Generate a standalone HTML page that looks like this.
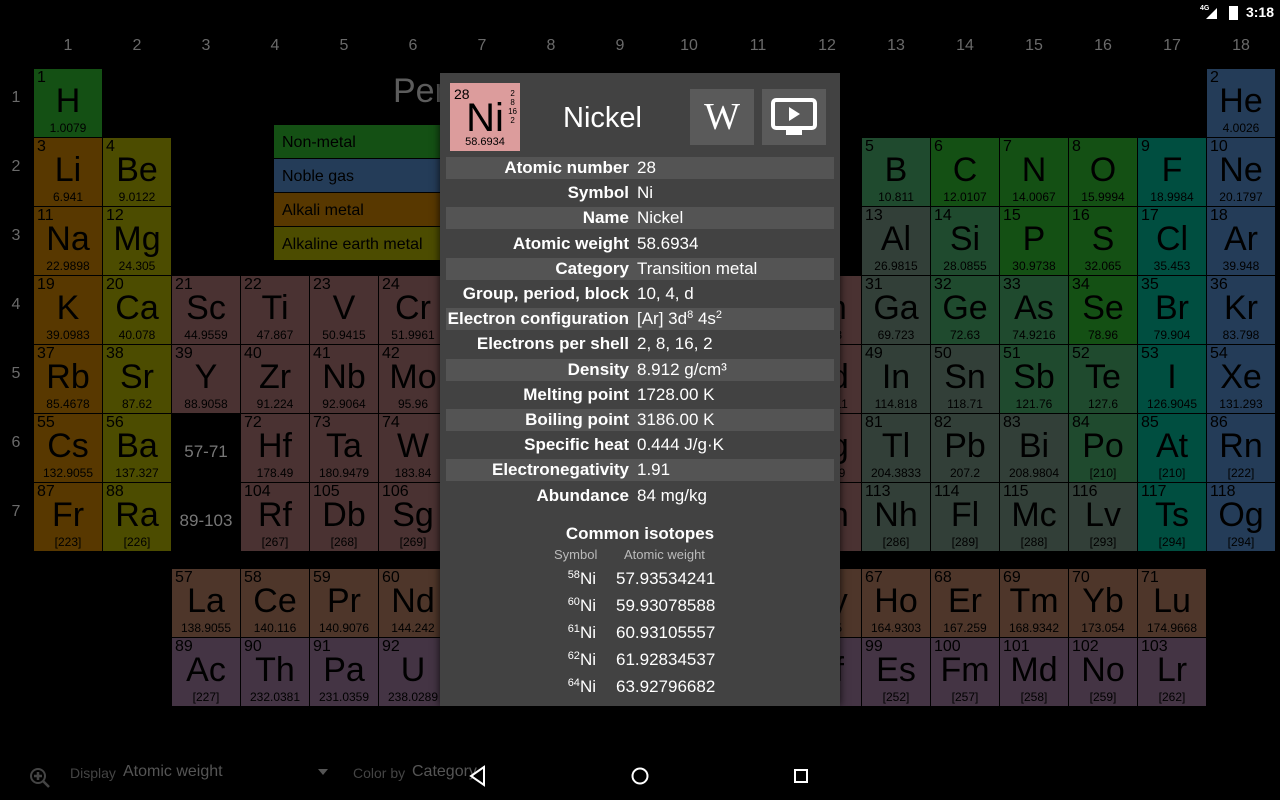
<!DOCTYPE html>
<html><head><meta charset="utf-8">
<style>
*{margin:0;padding:0;box-sizing:border-box}
body{width:1280px;height:800px;background:#000;overflow:hidden;position:relative;font-family:"Liberation Sans",sans-serif}
.c{position:absolute;width:68px;height:68px;color:#000;overflow:hidden}
.c .n{position:absolute;left:3px;top:1px;font-size:16px;line-height:16px}
.c .s{position:absolute;left:0;right:0;top:13px;text-align:center;font-size:34px;line-height:38px}
.c .w{position:absolute;left:0;right:0;top:52px;text-align:center;font-size:12px;line-height:14px}
.hd{position:absolute;color:#6a6a6a;font-size:16px;width:40px;text-align:center}
.lg{position:absolute;left:274px;width:200px;height:33px;font-size:16px;line-height:36px;padding-left:8px;color:#000}
#dlg{position:absolute;left:440px;top:73px;width:400px;height:633px;background:#424242;box-shadow:0 0 8px rgba(0,0,0,.8);color:#fff}
.row{position:absolute;left:6px;width:388px;height:22px;font-size:17px;line-height:22px}
.row.a{background:#545454}
.row .l{position:absolute;right:205px;font-weight:bold;white-space:nowrap}
.row .v{position:absolute;left:191px;white-space:nowrap}
sup{font-size:11px;vertical-align:6px;line-height:0}
.iso{position:absolute;font-size:17px;line-height:20px}
</style></head><body>
<div style="position:absolute;right:6px;top:4px;color:#fff;font-size:14px;font-weight:bold">3:18</div>
<div style="position:absolute;left:1200px;top:5px;color:#fff;font-size:7px;font-weight:bold">4G</div>
<div style="position:absolute;left:1206px;top:8px;width:0;height:0;border-left:11px solid transparent;border-bottom:11px solid #fff"></div>
<div style="position:absolute;left:1229px;top:6px;width:9px;height:14px;background:#fff"></div>
<div style="position:absolute;left:393px;top:72px;font-size:34px;color:#5c5c5c;white-space:nowrap">Periodic Table of Elements</div>
<div id="tbl"></div>
<div class="lg" style="top:125px;background:#145014">Non-metal</div>
<div class="lg" style="top:159px;background:#243c58">Noble gas</div>
<div class="lg" style="top:193px;background:#583800">Alkali metal</div>
<div class="lg" style="top:227px;background:#4c4c00">Alkaline earth metal</div>
<div style="position:absolute;left:172px;top:414px;width:68px;height:68px;color:#777;font-size:17px;text-align:center;line-height:76px">57-71</div>
<div style="position:absolute;left:172px;top:483px;width:68px;height:68px;color:#777;font-size:17px;text-align:center;line-height:76px">89-103</div>

<svg style="position:absolute;left:28px;top:766px" width="26" height="26"><circle cx="10" cy="10" r="7" fill="none" stroke="#444" stroke-width="2"/><path d="M10 6v8M6 10h8M15 15l6 6" stroke="#444" stroke-width="2.5"/></svg>
<div style="position:absolute;left:70px;top:765px;color:#444;font-size:14px">Display</div>
<div style="position:absolute;left:123px;top:763px;color:#555;font-size:16px">Atomic weight</div>
<div style="position:absolute;left:318px;top:769px;border-left:5px solid transparent;border-right:5px solid transparent;border-top:6px solid #555"></div>
<div style="position:absolute;left:353px;top:765px;color:#444;font-size:14px">Color by</div>
<div style="position:absolute;left:412px;top:763px;color:#555;font-size:16px">Category</div>
<svg style="position:absolute;left:466px;top:764px" width="24" height="24"><path d="M18 3L5 12l13 9z" fill="none" stroke="#fff" stroke-width="2"/></svg>
<svg style="position:absolute;left:628px;top:764px" width="24" height="24"><circle cx="12" cy="12" r="7.5" fill="none" stroke="#fff" stroke-width="2"/></svg>
<svg style="position:absolute;left:789px;top:764px" width="24" height="24"><rect x="6" y="6" width="12" height="12" fill="none" stroke="#fff" stroke-width="2"/></svg>

<div id="dlg">
 <div style="position:absolute;left:10px;top:10px;width:70px;height:68px;background:#dc9c9c;color:#000">
  <div style="position:absolute;left:4px;top:3px;font-size:14px">28</div>
  <div style="position:absolute;right:3px;top:6px;font-size:8px;line-height:9px;text-align:center">2<br>8<br>16<br>2</div>
  <div style="position:absolute;left:0;width:70px;top:14px;text-align:center;font-size:40px;line-height:42px">Ni</div>
  <div style="position:absolute;left:0;width:70px;top:53px;text-align:center;font-size:11px">58.6934</div>
 </div>
 <div style="position:absolute;left:80px;width:165px;top:29px;text-align:center;font-size:29px">Nickel</div>
 <div style="position:absolute;left:250px;top:16px;width:64px;height:56px;background:#5a5a5a;font-family:'Liberation Serif',serif;font-size:38px;text-align:center;line-height:56px">W</div>
 <div style="position:absolute;left:322px;top:16px;width:64px;height:56px;background:#5a5a5a">
  <svg width="64" height="56"><rect x="11" y="11" width="42" height="28" rx="3" fill="none" stroke="#fff" stroke-width="4"/><path d="M27 18v14l11-7z" fill="#fff"/><rect x="24" y="41" width="16" height="5" fill="#fff"/></svg>
 </div>
 <div id="rows"></div>
 <div style="position:absolute;left:0;width:400px;top:451px;text-align:center;font-weight:bold;font-size:17px">Common isotopes</div>
 <div style="position:absolute;left:114px;top:474px;font-size:13px;color:#bbb">Symbol</div>
 <div style="position:absolute;left:184px;top:474px;font-size:13px;color:#bbb">Atomic weight</div>
 <div id="isos"></div>
</div>
<script>
var T={nm:'#145014',ng:'#243c58',al:'#583800',ae:'#4c4c00',md:'#1f4a2e',pt:'#323f38',ha:'#004e40',tm:'#4a3232',la:'#4e362a',ac:'#443444'};
var E=[
[1,1,1,'H','1.0079','nm'],[2,1,18,'He','4.0026','ng'],
[3,2,1,'Li','6.941','al'],[4,2,2,'Be','9.0122','ae'],[5,2,13,'B','10.811','md'],[6,2,14,'C','12.0107','nm'],[7,2,15,'N','14.0067','nm'],[8,2,16,'O','15.9994','nm'],[9,2,17,'F','18.9984','ha'],[10,2,18,'Ne','20.1797','ng'],
[11,3,1,'Na','22.9898','al'],[12,3,2,'Mg','24.305','ae'],[13,3,13,'Al','26.9815','pt'],[14,3,14,'Si','28.0855','md'],[15,3,15,'P','30.9738','nm'],[16,3,16,'S','32.065','nm'],[17,3,17,'Cl','35.453','ha'],[18,3,18,'Ar','39.948','ng']];
function rowp(r,start,syms,ws,cats){for(var i=0;i<syms.length;i++)E.push([start+i,r,i+1,syms[i],ws[i],cats[i]]);}
var tmc=['al','ae'].concat(Array(10).fill('tm'));
rowp(4,19,['K','Ca','Sc','Ti','V','Cr','Mn','Fe','Co','Ni','Cu','Zn','Ga','Ge','As','Se','Br','Kr'],['39.0983','40.078','44.9559','47.867','50.9415','51.9961','54.938','55.845','58.9332','58.6934','63.546','65.38','69.723','72.63','74.9216','78.96','79.904','83.798'],tmc.concat(['pt','md','md','nm','ha','ng']));
rowp(5,37,['Rb','Sr','Y','Zr','Nb','Mo','Tc','Ru','Rh','Pd','Ag','Cd','In','Sn','Sb','Te','I','Xe'],['85.4678','87.62','88.9058','91.224','92.9064','95.96','[98]','101.07','102.9055','106.42','107.8682','112.411','114.818','118.71','121.76','127.6','126.9045','131.293'],tmc.concat(['pt','pt','md','md','ha','ng']));
var s6=['Cs','Ba',null,'Hf','Ta','W','Re','Os','Ir','Pt','Au','Hg','Tl','Pb','Bi','Po','At','Rn'],w6=['132.9055','137.327',null,'178.49','180.9479','183.84','186.207','190.23','192.217','195.084','196.9666','200.59','204.3833','207.2','208.9804','[210]','[210]','[222]'],c6=tmc.concat(['pt','pt','pt','md','ha','ng']);
var n6=[55,56,0,72,73,74,75,76,77,78,79,80,81,82,83,84,85,86];
var s7=['Fr','Ra',null,'Rf','Db','Sg','Bh','Hs','Mt','Ds','Rg','Cn','Nh','Fl','Mc','Lv','Ts','Og'],w7=['[223]','[226]',null,'[267]','[268]','[269]','[270]','[269]','[278]','[281]','[281]','[285]','[286]','[289]','[288]','[293]','[294]','[294]'],c7=tmc.concat(['pt','pt','pt','pt','ha','ng']);
var n7=[87,88,0,104,105,106,107,108,109,110,111,112,113,114,115,116,117,118];
for(var i=0;i<18;i++){if(s6[i])E.push([n6[i],6,i+1,s6[i],w6[i],c6[i]]);if(s7[i])E.push([n7[i],7,i+1,s7[i],w7[i],c7[i]]);}
var la=['La','Ce','Pr','Nd','Pm','Sm','Eu','Gd','Tb','Dy','Ho','Er','Tm','Yb','Lu'],law=['138.9055','140.116','140.9076','144.242','[145]','150.36','151.964','157.25','158.9254','162.5','164.9303','167.259','168.9342','173.054','174.9668'];
var ac=['Ac','Th','Pa','U','Np','Pu','Am','Cm','Bk','Cf','Es','Fm','Md','No','Lr'],acw=['[227]','232.0381','231.0359','238.0289','[237]','[244]','[243]','[247]','[247]','[251]','[252]','[257]','[258]','[259]','[262]'];
var h='';
function cell(n,x,y,s,w,c){h+='<div class="c" style="left:'+x+'px;top:'+y+'px;background:'+T[c]+'"><div class="n">'+n+'</div><div class="s">'+s+'</div><div class="w">'+w+'</div></div>';}
E.forEach(function(e){cell(e[0],34+(e[2]-1)*69,69+(e[1]-1)*69,e[3],e[4],e[5]);});
for(var i=0;i<15;i++){cell(57+i,172+i*69,569,la[i],law[i],'la');cell(89+i,172+i*69,638,ac[i],acw[i],'ac');}
for(var i=1;i<=18;i++)h+='<div class="hd" style="left:'+(48+(i-1)*69)+'px;top:37px">'+i+'</div>';
for(var i=1;i<=7;i++)h+='<div class="hd" style="left:-4px;top:'+(89+(i-1)*69)+'px">'+i+'</div>';
document.getElementById('tbl').innerHTML=h;
var R=[['Atomic number','28'],['Symbol','Ni'],['Name','Nickel'],['Atomic weight','58.6934'],['Category','Transition metal'],['Group, period, block','10, 4, d'],['Electron configuration','[Ar] 3d<sup>8</sup> 4s<sup>2</sup>'],['Electrons per shell','2, 8, 16, 2'],['Density','8.912 g/cm³'],['Melting point','1728.00 K'],['Boiling point','3186.00 K'],['Specific heat','0.444 J/g·K'],['Electronegativity','1.91'],['Abundance','84 mg/kg']];
var r='';R.forEach(function(x,i){r+='<div class="row'+(i%2==0?' a':'')+'" style="top:'+(84+i*25.2)+'px"><span class="l">'+x[0]+'</span><span class="v">'+x[1]+'</span></div>';});
document.getElementById('rows').innerHTML=r;
var I=[['58','57.93534241'],['60','59.93078588'],['61','60.93105557'],['62','61.92834537'],['64','63.92796682']];
var q='';I.forEach(function(x,i){var y=496+i*27;q+='<div class="iso" style="right:244px;top:'+y+'px"><sup>'+x[0]+'</sup>Ni</div><div class="iso" style="left:176px;top:'+y+'px">'+x[1]+'</div>';});
document.getElementById('isos').innerHTML=q;
</script>
</body></html>
